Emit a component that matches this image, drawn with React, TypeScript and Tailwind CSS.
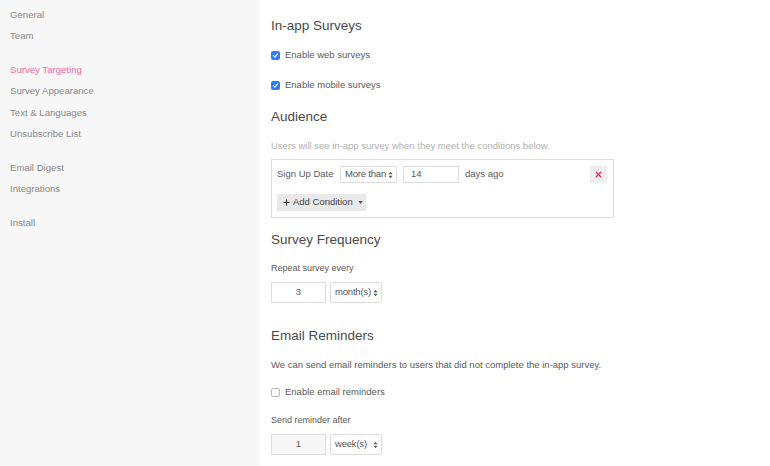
import { Plus, X } from "lucide-react";

const groups = [
  ["General", "Team"],
  ["Survey Targeting", "Survey Appearance", "Text & Languages", "Unsubscribe List"],
  ["Email Digest", "Integrations"],
  ["Install"],
];

function Checkbox({ checked }: { checked?: boolean }) {
  return checked ? (
    <span className="w-[9px] h-[9px] rounded-[2px] bg-[#2f7cf6] flex items-center justify-center">
      <svg viewBox="0 0 10 10" className="w-[7px] h-[7px]">
        <path d="M2 5.2 L4.2 7.4 L8 2.6" stroke="white" strokeWidth="1.6" fill="none" strokeLinecap="round" />
      </svg>
    </span>
  ) : (
    <span className="w-[9px] h-[9px] rounded-[2px] border border-[#bbb] bg-white" />
  );
}

function Arrows() {
  return (
    <svg viewBox="0 0 6 10" className="w-[5px] h-[8px] ml-auto shrink-0">
      <path d="M0.5 4 L3 1 L5.5 4 Z M0.5 6 L3 9 L5.5 6 Z" fill="#555" />
    </svg>
  );
}

function Select({ label, w }: { label: string; w: string }) {
  return (
    <div className={`${w} flex items-center whitespace-nowrap border border-[#ddd] rounded-[2px] bg-white pl-[4px] pr-[3px] tracking-[-0.2px] text-[#555]`}>
      {label}
      <Arrows />
    </div>
  );
}

export default function App() {
  return (
    <div className="flex w-[770px] h-[466px] overflow-hidden bg-white text-[#5a5a5a]" style={{ fontFamily: '"Liberation Sans", Arial, sans-serif' }}>
      {/* Sidebar */}
      <div className="w-[260px] shrink-0 bg-[#f7f7f7] pt-[4px] pl-[10px] text-[9.6px] text-[#888] flex flex-col gap-[12px]">
        {groups.map((g, i) => (
          <div key={i}>
            {g.map((item) => (
              <div
                key={item}
                className={`h-[21.5px] flex items-center ${item === "Survey Targeting" ? "text-[#f5689f]" : ""}`}
              >
                {item}
              </div>
            ))}
          </div>
        ))}
      </div>

      {/* Main */}
      <div className="flex-1 pl-[11px] pt-[1px] text-[9.5px] whitespace-nowrap">
        <h2 className="mt-[15px] h-[20px] flex items-center text-[13.5px] text-[#4a4a4a]">In-app Surveys</h2>
        <div className="mt-[9px] h-[20px] flex items-center gap-[5px]">
          <Checkbox checked />
          Enable web surveys
        </div>
        <div className="mt-[10px] h-[20px] flex items-center gap-[5px]">
          <Checkbox checked />
          Enable mobile surveys
        </div>

        <h2 className="mt-[12px] h-[20px] flex items-center text-[13.5px] text-[#4a4a4a]">Audience</h2>
        <p className="mt-[11px] h-[16px] flex items-center text-[#b0b0b0]">
          Users will see in-app survey when they meet the conditions below.
        </p>
        <div className="mt-[5px] w-[343px] h-[59px] border border-[#ddd] pt-[6px] px-[5px]">
          <div className="h-[17px] flex items-center">
            <span className="w-[63px]">Sign Up Date</span>
            <Select label="More than" w="w-[57px] h-[17px]" />
            <div className="ml-[6px] w-[56px] h-[17px] border border-[#ddd] flex items-center pl-[7px]">14</div>
            <span className="ml-[6px]">days ago</span>
            <div className="ml-auto mr-[1px] w-[17px] h-[17px] bg-[#eee] flex items-center justify-center">
              <X className="w-[9px] h-[9px] text-[#f0285a]" strokeWidth={3.5} />
            </div>
          </div>
          <div className="mt-[11px] w-[89px] h-[17px] bg-[#e9e9e9] flex items-center pl-[5px] gap-[2px]">
            <Plus className="w-[9px] h-[9px] text-[#333]" strokeWidth={3} />
            <span className="text-[#444]">Add Condition</span>
            <svg viewBox="0 0 6 4" className="w-[5px] h-[3px] ml-[3px]">
              <path d="M0 0 L6 0 L3 4 Z" fill="#555" />
            </svg>
          </div>
        </div>

        <h2 className="mt-[12px] h-[20px] flex items-center text-[13.5px] text-[#4a4a4a]">Survey Frequency</h2>
        <p className="mt-[12px] h-[14px] flex items-center text-[9px]">Repeat survey every</p>
        <div className="mt-[6px] flex gap-[4px] h-[21px]">
          <div className="w-[55px] border border-[#ddd] flex items-center justify-center">3</div>
          <Select label="month(s)" w="w-[52px]" />
        </div>

        <h2 className="mt-[23px] h-[20px] flex items-center text-[13.5px] text-[#4a4a4a]">Email Reminders</h2>
        <p className="mt-[11px] h-[16px] flex items-center">
          We can send email reminders to users that did not complete the in-app survey.
        </p>
        <div className="mt-[9px] h-[20px] flex items-center gap-[5px]">
          <Checkbox />
          Enable email reminders
        </div>
        <p className="mt-[12px] h-[14px] flex items-center text-[9px]">Send reminder after</p>
        <div className="mt-[6px] flex gap-[4px] h-[21px]">
          <div className="w-[55px] border border-[#ddd] bg-[#f7f7f7] flex items-center justify-center">1</div>
          <Select label="week(s)" w="w-[52px]" />
        </div>
      </div>
    </div>
  );
}
